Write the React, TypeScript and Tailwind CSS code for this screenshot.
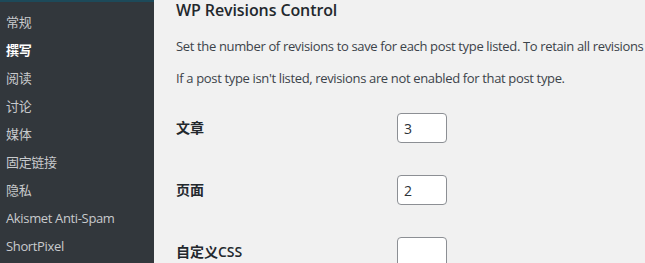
import React from "react";

const menu = ["常规", "撰写", "阅读", "讨论", "媒体", "固定链接", "隐私", "Akismet Anti-Spam", "ShortPixel"];

const rows = [
  { label: "文章", value: "3" },
  { label: "页面", value: "2" },
  { label: "自定义CSS", value: "" },
];

export default function App() {
  return (
    <div
      className="flex h-[263px] w-[645px] overflow-hidden bg-[#f1f1f1]"
      style={{ fontFamily: '"Open Sans", "Noto Sans CJK SC", sans-serif' }}
    >
      <aside className="w-[154px] shrink-0 bg-[#32373c] border-t-2 border-[#1d4a5a] pt-[7px]">
        {menu.map((m) => (
          <div
            key={m}
            className={
              "h-[28px] flex items-center pl-[6px] text-[13px] tracking-[-0.35px] whitespace-nowrap " +
              (m === "撰写" ? "text-white font-semibold" : "text-[#c8cacd]")
            }
          >
            {m}
          </div>
        ))}
      </aside>
      <main className="flex-1 min-w-0 pl-[22px] text-[#23282d]">
        <h1 className="text-[16px] font-semibold leading-[22px] -mt-[1px] tracking-[-0.1px] whitespace-nowrap">WP Revisions Control</h1>
        <p className="text-[13px] leading-[20px] mt-[15px] tracking-[-0.35px] whitespace-nowrap text-[#3c434a]">
          Set the number of revisions to save for each post type listed. To retain all revisions
        </p>
        <p className="text-[13px] leading-[20px] mt-[12px] tracking-[-0.35px] whitespace-nowrap text-[#3c434a]">
          If a post type isn't listed, revisions are not enabled for that post type.
        </p>
        <div className="mt-[9px]">
          {rows.map((r) => (
            <div key={r.label} className="flex items-center h-[62px]">
              <div className="w-[221px] shrink-0 text-[14px] font-semibold -mt-[2px]">{r.label}</div>
              <input
                type="text"
                defaultValue={r.value}
                className="w-[50px] h-[30px] bg-white border border-[#8c8f94] rounded-[4px] px-[6px] text-[14px] text-[#2c3338] outline-none"
              />
            </div>
          ))}
        </div>
      </main>
    </div>
  );
}
